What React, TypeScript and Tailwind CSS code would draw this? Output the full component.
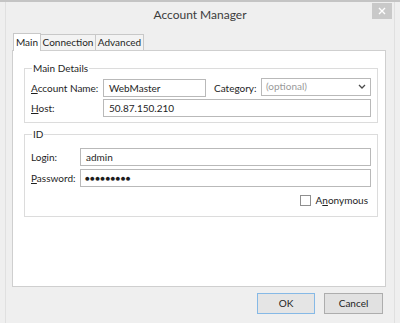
import type { ReactNode } from "react";

function Field({ value, className = "" }: { value?: string; className?: string }) {
  return (
    <div
      className={
        "h-[18px] border border-[#b9b9b9] bg-white px-[5px] flex items-center text-[10px] text-[#1e1e1e] " +
        className
      }
    >
      {value}
    </div>
  );
}

function Group({ title, children, className = "" }: { title: string; children: ReactNode; className?: string }) {
  return (
    <fieldset className={"border border-[#dcdcdc] px-[6px] " + className}>
      <legend className="ml-[1px] px-[1px] text-[10px] text-[#1e1e1e] leading-[12px]">{title}</legend>
      {children}
    </fieldset>
  );
}

export default function App() {
  return (
    <div
      className="w-[400px] h-[323px] bg-[#efefef] border-t-2 border-[#c4c4c4] overflow-hidden text-[#1e1e1e] whitespace-nowrap"
      style={{ fontFamily: 'Lato, "Noto Sans", sans-serif' }}
    >
      <div className="mx-[5px] h-full border-x border-[#e0e0e0] relative">
        {/* title bar */}
        <div className="h-[26px] flex items-center justify-center text-[12px] text-[#3c3c3c]">
          Account Manager
        </div>
        <div className="absolute right-[2px] top-[1px] w-[20px] h-[16px] bg-[#c9c9c9] flex items-center justify-center">
          <svg width="8" height="8" viewBox="0 0 8 8">
            <path d="M1 1 L7 7 M7 1 L1 7" stroke="#ffffff" strokeWidth="1.4" />
          </svg>
        </div>

        {/* tabs */}
        <div className="ml-[7px] mt-[4px] flex items-end h-[18px] text-[10px]">
          <div className="w-[28px] h-[18px] bg-white border border-b-0 border-[#c8c8c8] flex items-center justify-center relative z-10 -mb-[1px]">
            Main
          </div>
          <div className="w-[55px] h-[16px] bg-[#f3f3f3] border border-l-0 border-b-0 border-[#c8c8c8] flex items-center justify-center">
            Connection
          </div>
          <div className="w-[48px] h-[16px] bg-[#f3f3f3] border border-l-0 border-b-0 border-[#c8c8c8] flex items-center justify-center">
            Advanced
          </div>
        </div>

        {/* tab panel */}
        <div className="ml-[6px] w-[374px] h-[237px] bg-white border border-[#cfcfcf] px-[11px] pt-[11px] flex flex-col gap-[5px]">
          <Group title="Main Details" className="pb-[5px]">
            <div className="flex items-center h-[20px] mt-[4px] text-[10px]">
              <span className="w-[72px]">
                <span className="underline underline-offset-1">A</span>ccount Name:
              </span>
              <Field value="WebMaster" className="w-[103px]" />
              <span className="ml-[8px] w-[47px]">
                Cate<span className="underline underline-offset-1">g</span>ory:
              </span>
              <div className="w-[110px] h-[18px] -mt-[3px] border border-[#b9b9b9] bg-white px-[4px] flex items-center justify-between text-[#9a9a9a]">
                (optional)
                <svg width="8" height="6" viewBox="0 0 8 6">
                  <path d="M1 1 L4 4 L7 1" stroke="#4a4a4a" strokeWidth="1.3" fill="none" />
                </svg>
              </div>
            </div>
            <div className="flex items-center h-[18px] mt-[1px] text-[10px]">
              <span className="w-[72px]">
                <span className="underline underline-offset-1">H</span>ost:
              </span>
              <Field value="50.87.150.210" className="w-[268px]" />
            </div>
          </Group>

          <Group title="ID" className="pb-[8px]">
            <div className="flex items-center h-[18px] mt-[8px] text-[10px]">
              <span className="w-[49px]">Login:</span>
              <Field value="admin" className="w-[291px]" />
            </div>
            <div className="flex items-center h-[18px] mt-[3px] text-[10px]">
              <span className="w-[49px]">
                <span className="underline underline-offset-1">P</span>assword:
              </span>
              <div className="w-[291px] h-[18px] border border-[#b9b9b9] bg-white px-[4px] flex items-center text-[8px] tracking-[0.3px] text-[#1e1e1e]">
                {"\u25CF\u25CF\u25CF\u25CF\u25CF\u25CF\u25CF\u25CF\u25CF"}
              </div>
            </div>
            <div className="flex items-center justify-end gap-[5px] mt-[6px] mr-[3px] text-[10px]">
              <div className="w-[11px] h-[11px] border border-[#8f8f8f] bg-white" />
              <span>
                A<span className="underline underline-offset-1">n</span>onymous
              </span>
            </div>
          </Group>
        </div>

        {/* buttons */}
        <div className="flex justify-end gap-[9px] mr-[11px] mt-[6px] text-[10px]">
          <button className="w-[58px] h-[21px] bg-[#e5e5e5] border border-[#86b9e6]">OK</button>
          <button className="w-[59px] h-[21px] bg-[#e1e1e1] border border-[#adadad]">Cancel</button>
        </div>
      </div>
    </div>
  );
}
